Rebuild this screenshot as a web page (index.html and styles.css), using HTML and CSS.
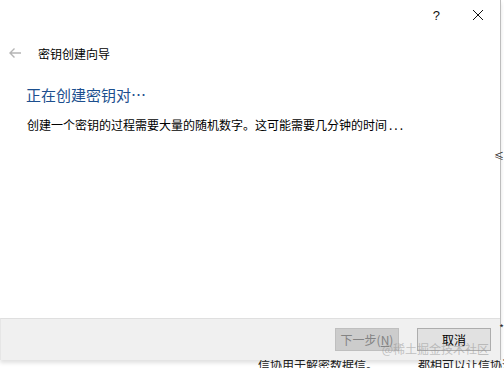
FILE: index.html
```html
<!DOCTYPE html>
<html lang="zh-CN">
<head>
    <meta charset="UTF-8">
    <title>密钥创建向导</title>
    <link rel="stylesheet" href="styles.css">
</head>
<body>
    <div class="dialog">
        <div class="titlebar">
            <span class="help">?</span>
            <span class="close">
                <svg width="12" height="12" viewBox="0 0 12 12"><path d="M1 1 L11 11 M11 1 L1 11" stroke="#111" stroke-width="1"/></svg>
            </span>
        </div>
        <div class="nav">
            <svg class="back" width="14" height="12" viewBox="0 0 14 12"><path d="M13 6 H2 M6.5 1.5 L2 6 L6.5 10.5" stroke="#b5b5b5" stroke-width="1.4" fill="none"/></svg>
            <span class="wizard-title">密钥创建向导</span>
        </div>
        <div class="content">
            <h1>正在创建密钥对…</h1>
            <p>创建一个密钥的过程需要大量的随机数字。这可能需要几分钟的时间<span class="dots">...</span></p>
        </div>
        <div class="footer">
            <button class="btn disabled">下一步(<u>N</u>)</button>
            <button class="btn">取消</button>
            <span class="watermark">@稀土掘金技术社区</span>
        </div>
    </div>
    <div class="page-below">
        <span class="line">信协用于解密数据信。</span>
        <span class="line">都相可以让信协消息</span>
    </div>
    <span class="edge-mark top">≤</span>
    <span class="edge-mark bottom">*</span>
</body>
</html>
```

FILE: styles.css
```css
body {
    margin: 0;
    width: 504px;
    height: 368px;
    overflow: hidden;
    background: #fff;
    font-family: "Noto Sans CJK SC", "Noto Sans", sans-serif;
    position: relative;
}
.dialog {
    width: 500px;
    height: 360px;
    border-right: 1px solid #bdbdbd;
    display: flex;
    flex-direction: column;
    background: #fff;
    box-shadow: 0 3px 4px rgba(0, 0, 0, 0.12);
    position: relative;
    z-index: 1;
}
.titlebar {
    height: 32px;
    display: flex;
    justify-content: flex-end;
    align-items: center;
}
.help {
    font-family: "Liberation Sans", sans-serif;
    font-size: 13px;
    color: #111;
    margin-right: 32px;
    margin-top: -2px;
}
.close {
    display: flex;
    margin-right: 16px;
    margin-top: -2px;
}
.nav {
    height: 42px;
    display: flex;
    align-items: center;
    padding-left: 8px;
}
.back {
    margin-right: 16px;
}
.wizard-title {
    font-size: 12px;
    color: #000;
}
.content {
    flex: 1;
    padding-left: 26px;
}
.content h1 {
    margin: 10px 0 0;
    font-size: 15px;
    font-weight: normal;
    color: #1c4f8e;
}
.content p {
    margin: 11px 0 0 1px;
    font-size: 12px;
    color: #000;
}
.dots {
    letter-spacing: 2px;
    margin-left: 2px;
}
.footer {
    height: 42px;
    background: #f0f0f0;
    border-top: 1px solid #dfdfdf;
    border-left: 1px solid #e6e6e6;
    display: flex;
    justify-content: flex-end;
    align-items: flex-start;
    padding: 9px 9px 0 0;
    box-sizing: border-box;
    gap: 18px;
    position: relative;
}
.btn {
    width: 74px;
    height: 23px;
    font-family: "Noto Sans CJK SC", sans-serif;
    font-size: 12px;
    background: #e1e1e1;
    border: 1px solid #adadad;
    color: #000;
    padding: 0;
    line-height: 19px;
}
.btn.disabled {
    width: 64px;
    background: #cccccc;
    border-color: #bfbfbf;
    color: #838383;
}
.watermark {
    position: absolute;
    right: 11px;
    bottom: 3px;
    font-size: 12px;
    color: rgba(150, 150, 150, 0.55);
}
.page-below {
    height: 8px;
    display: flex;
    gap: 40px;
    padding-left: 258px;
    font-size: 12px;
    line-height: 12px;
    color: #222;
    margin-top: -1px;
}
.page-below .line {
    white-space: nowrap;
}
.edge-mark {
    position: absolute;
    right: 0;
    font-size: 10px;
    color: #222;
    z-index: 2;
}
.edge-mark.top {
    top: 148px;
}
.edge-mark.bottom {
    top: 320px;
}
```
